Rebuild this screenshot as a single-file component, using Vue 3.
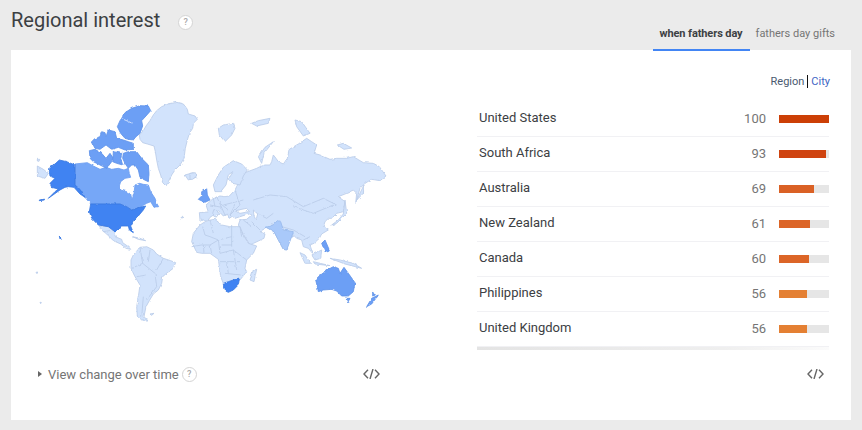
<script setup>
const rows = [
  { name: 'United States', value: 100, color: '#cc3f06' },
  { name: 'South Africa', value: 93, color: '#cf4410' },
  { name: 'Australia', value: 69, color: '#da6125' },
  { name: 'New Zealand', value: 61, color: '#dc6527' },
  { name: 'Canada', value: 60, color: '#dc6527' },
  { name: 'Philippines', value: 56, color: '#e48033' },
  { name: 'United Kingdom', value: 56, color: '#e48033' }
]
const light = [
  'M418 135L430 122 438 108 450 92 458 78 470 62 485 50 505 42 530 37 550 42 562 58 565 72 585 78 592 88 580 100 578 115 568 130 562 150 556 175 552 205 540 225 525 240 515 255 505 275 498 288 488 278 482 255 475 235 470 210 466 185 462 168 442 162 428 158 420 148Z',
  'M112 228L130 238 145 250 135 265 112 258Z',
  'M298 408L325 410 335 418 345 428 350 442 365 448 368 458 385 470 392 478 378 475 362 462 340 452 320 432 305 420Z',
  'M393 510L400 495 420 472 440 470 460 480 470 492 490 505 512 512 527 518 520 535 502 548 488 560 485 580 475 600 460 612 448 632 438 650 432 680 442 690 425 690 412 678 410 650 415 620 420 585 405 560 393 535Z',
  'M555 255L580 248 588 262 565 270Z',
  'M398 440L420 445 437 452 415 448Z',
  'M450 672L462 670 455 676Z',
  'M112 208L119 208 117 214 112 213Z',
  'M108 547L113 546 111 551Z',
  'M120 637L124 637 122 641Z',
  'M543 382L548 382 546 385Z'
]
const eurasia = [
  'M135 300L150 270 165 248 200 235 210 230 225 225 240 225 245 215 250 195 258 205 265 215 280 222 292 205 298 178 325 162 350 145 365 155 380 165 372 190 390 195 420 208 440 205 470 205 490 200 520 218 550 220 568 230 588 258 570 272 545 268 525 280 510 295 497 340 500 310 490 300 470 310 445 320 465 335 460 365 440 370 425 385 415 385 405 395 400 410 415 420 395 432 388 445 372 460 360 465 368 490 355 475 340 470 335 450 320 445 310 435 300 445 290 480 280 478 265 450 252 425 230 412 210 425 225 432 222 445 180 465 155 425 145 405 150 390 170 388 185 375 175 372 135 385 128 378 118 385 112 372 100 378 85 362 75 372 60 382 55 390 30 390 28 368 55 366 48 345 70 325 90 318 105 320 118 318Z',
  'M70 285L85 255 100 232 130 212 155 222 172 240 160 258 150 285 128 280 118 265 128 245 115 255 108 285 92 305 75 305Z',
  'M85 115L100 105 130 100 135 115 125 135 105 155 88 135Z',
  'M185 100L205 92 240 85 235 100 200 108Z',
  'M315 90L335 95 360 130 340 138 320 110Z',
  'M205 200L225 172 250 155 222 190 215 220Z',
  'M500 330L522 285 520 310Z',
  'M425 405L445 390 460 372 465 330 470 370 440 400Z',
  'M442 165L460 160 485 174 462 178Z',
  'M0 250L16 248 20 258 8 268 0 268Z',
  'M330 488L345 495 362 520 345 520Z',
  'M365 495L395 480 392 505 375 510Z',
  'M370 515L420 527 375 522Z',
  'M420 505L450 510 490 520 515 535 465 522Z',
  'M180 570L190 540 200 538 192 575Z',
  'M68 370L72 358 88 370 78 382Z'
]
const africa = 'M5 455L10 430 30 405 50 392 75 388 95 405 120 410 150 410 160 435 175 460 200 468 190 490 170 510 165 535 170 545 150 570 115 578 103 588 92 560 88 530 85 508 60 490 35 490 20 487Z'
const borders = [
  'M38 410L45 435 60 440 85 450 125 440M5 470L35 465 60 465 85 450 90 490 130 480 170 510M125 405V470M90 515H150M105 550L155 555M150 410L155 440M130 480L140 540M60 390L70 430M40 465L42 488M60 465L65 490M95 465H125M110 515L115 550',
  'M120 375L150 345 135 300M100 345L160 330M80 320L105 375M190 330L240 315 290 320 340 350 400 325 440 345M190 365L230 385 250 370M240 400L310 420 345 440M310 350L370 370 430 345M90 340L115 360M135 345L120 375M340 450L360 440M185 395L215 425M160 390L185 410M60 345L95 352M70 325L75 350'
]
const americaBorders = 'M420 472L428 520 465 550 470 590 440 630M395 535L428 520M490 505L470 540M450 480L445 515M310 425L340 420M410 560L440 555M430 620L425 680'
</script>

<template>
  <div class="page">
    <header class="head">
      <div class="title-wrap">
        <h1 class="title">Regional interest</h1>
        <span class="help help-title">?</span>
      </div>
      <nav class="tabs">
        <span class="tab active">when fathers day</span>
        <span class="tab">fathers day gifts</span>
      </nav>
    </header>

    <main class="card">
      <section class="left">
        <svg class="map" width="365" height="235" viewBox="30 95 365 235" aria-label="World map">
          <defs>
            <filter id="rough" x="-2%" y="-2%" width="104%" height="104%" filterUnits="objectBoundingBox">
              <feTurbulence type="fractalNoise" baseFrequency="0.22" numOctaves="2" seed="4" result="n" />
              <feDisplacementMap in="SourceGraphic" in2="n" scale="2.5" xChannelSelector="R" yChannelSelector="G" />
              <feGaussianBlur stdDeviation="0.25" />
            </filter>
          </defs>
          <g filter="url(#rough)">
            <rect x="30" y="95" width="365" height="235" fill="#fff" />
            <g transform="translate(0 90) scale(.33333)" stroke-width="2.5" stroke-linejoin="round">
              <path v-for="d in light" :key="d" :d="d" fill="#d2e3fc" stroke="#b9cbe8" />
              <path :d="americaBorders" fill="none" stroke="#b9cbe8" />
              <path d="M225 222L262 218 280 228 300 238 318 232 335 238 355 235 372 240 385 235 388 250 392 262 375 265 362 275 358 288 362 300 380 305 392 312 396 330 402 310 405 285 418 280 430 283 445 285 452 305 465 325 470 340 476 350 462 352 452 335 440 340 420 352 395 360 380 350 360 342 272 342 255 322 240 298 225 285Z" fill="#76a7f7" stroke="#6c9df0" />
              <g fill="#6c9ff5" stroke="#5e92e8">
                <path d="M352 110L360 92 365 85 375 68 395 55 420 47 445 48 452 62 438 78 425 92 428 108 420 130 408 140 400 150 385 148 375 145 362 130Z" />
                <path d="M275 155L285 145 300 140 305 125 315 128 318 140 325 120 345 125 350 145 370 150 385 155 400 160 400 178 375 180 355 172 335 178 318 165 300 178 285 175Z" />
                <path d="M268 182L285 178 305 190 318 205 330 190 340 205 335 215 320 235 300 225 280 215 270 205Z" />
                <path d="M340 185L365 190 362 205 368 225 350 220 338 215Z" />
                <path d="M370 190L385 185 410 185 425 205 445 225 447 250 445 275 430 268 420 262 415 240 405 225 395 225 385 235 375 220 368 205Z" />
              </g>
              <path d="M366 86L395 99" fill="none" stroke="#fff" stroke-width="2" />
              <g fill="#3f83f2" stroke="#3a78e0">
                <path d="M272 342L360 342 380 350 395 360 420 352 437 348 430 360 415 378 400 392 392 408 400 428 388 420 385 408 365 408 345 425 325 410 295 405 275 385 268 365Z" />
                <path d="M150 232L165 222 178 210 200 215 225 225 225 285 240 298 255 322 240 312 222 292 205 290 195 292 180 300 145 325 165 305 175 297 155 292 150 280 165 265 150 258 148 245Z" />
                <path d="M178 438L184 445 180 447Z" />
                <path d="M118 330L133 327 133 330 118 332Z" />
              </g>
            </g>
            <g transform="translate(190 90) scale(.33333)" stroke-width="2.5" stroke-linejoin="round">
              <path v-for="d in eurasia" :key="d" :d="d" fill="#d2e3fc" stroke="#b9cbe8" />
              <path :d="africa" fill="#d2e3fc" stroke="#b9cbe8" />
              <path v-for="d in borders" :key="d" :d="d" fill="none" stroke="#b9cbe8" />
              <path d="M135 362L170 355 178 365 150 370Z" fill="#fff" stroke="#b9cbe8" />
              <path d="M190 360L203 372 198 390 192 378Z" fill="#fff" stroke="#b9cbe8" />
              <path d="M228 412L250 405 262 392 272 395 280 420 310 425 305 440 290 480 280 478 265 450 252 425Z" fill="#a9c9fa" stroke="#98b9ec" />
              <g fill="#6c9ff5" stroke="#5e92e8">
                <path d="M377 570L385 560 405 545 415 538 430 530 445 535 450 550 462 532 475 550 495 578 490 605 475 618 455 618 440 603 425 598 400 600 385 605 382 590Z" />
                <path d="M468 625L480 625 473 638Z" />
                <path d="M530 650L545 625 565 615 545 642Z" />
                <path d="M548 603L556 615 548 618Z" />
                <path d="M25 328L35 318 35 305 50 295 52 315 60 330 45 337Z" />
                <path d="M395 460L405 450 418 480 405 485Z" />
              </g>
              <path d="M103 590L100 580 115 575 130 570 148 567 145 585 130 600 115 607 107 603Z" fill="#3f83f2" stroke="#3a78e0" />
            </g>
          </g>
        </svg>
        <div class="foot">
          <span class="view">
            <i class="tri"></i>
            <span class="view-text">View change over time</span>
            <span class="help">?</span>
          </span>
          <svg class="code" width="17" height="10" viewBox="0 0 17 10"><path d="M5 .8L1 5l4 4.200M12 .8L16 5l-4 4.200M10 0L7 10" fill="none" stroke="#666" stroke-width="1.400" /></svg>
        </div>
      </section>

      <section class="right">
        <div class="switch"><span class="region">Region</span><span class="city">City</span></div>
        <ul class="list">
          <li v-for="r in rows" :key="r.name" class="row">
            <span class="name">{{ r.name }}</span>
            <span class="num">{{ r.value }}</span>
            <span class="track"><span class="fill" :style="{ width: r.value + '%', background: r.color }"></span></span>
          </li>
        </ul>
        <div class="right-foot">
          <svg class="code" width="17" height="10" viewBox="0 0 17 10"><path d="M5 .8L1 5l4 4.200M12 .8L16 5l-4 4.200M10 0L7 10" fill="none" stroke="#666" stroke-width="1.400" /></svg>
        </div>
      </section>
    </main>
  </div>
</template>

<style>
html, body { margin: 0; background: #ebebeb; }
</style>

<style scoped>
.page {
  width: 862px;
  height: 430px;
  overflow: hidden;
  background: #ebebeb;
  font-family: Roboto, sans-serif;
}
.head {
  height: 50px;
  padding: 0 11px;
  display: flex;
  justify-content: space-between;
  box-sizing: border-box;
}
.title-wrap { display: flex; align-items: flex-start; padding-top: 8px; }
.title { margin: 0; font-size: 20px; line-height: 25px; font-weight: 400; color: #3c4043; }
.help {
  width: 15px;
  height: 15px;
  flex: none;
  border: 1px solid #d4d4d4;
  border-radius: 50%;
  box-sizing: border-box;
  background: #fff;
  color: #a8a8a8;
  font-size: 9px;
  font-weight: 500;
  line-height: 13px;
  text-align: center;
}
.help-title { margin: 7px 0 0 18px; }
.tabs { display: flex; margin-right: 10px; position: relative; z-index: 1; }
.tab {
  height: 51px;
  box-sizing: border-box;
  padding: 27px 6px 0;
  font-size: 11px;
  line-height: 13px;
  color: #757575;
}
.tab.active {
  font-weight: 700;
  letter-spacing: -.1px;
  color: #3c4043;
  border-bottom: 2px solid #4285f4;
  padding-right: 7px;
}
.card {
  margin: 0 11px;
  height: 370px;
  background: #fff;
  display: flex;
}
.left {
  width: 370px;
  padding: 45px 0 0 19px;
  flex: none;
}
.map { display: block; }
.foot {
  margin: 34px 0 0 8px;
  width: 342px;
  height: 20px;
  display: flex;
  align-items: center;
  justify-content: space-between;
}
.view { display: flex; align-items: center; }
.tri {
  width: 0;
  height: 0;
  border-left: 4px solid #666;
  border-top: 3.5px solid transparent;
  border-bottom: 3.5px solid transparent;
}
.view-text { margin-left: 6px; font-size: 13px; color: #757575; }
.foot .help { margin-left: 3px; }
.right {
  margin-left: 77px;
  width: 352px;
  display: flex;
  flex-direction: column;
}
.switch {
  margin: 25px -1px 0 0;
  height: 13px;
  display: flex;
  justify-content: flex-end;
  font-size: 11px;
  line-height: 14px;
}
.region { color: #4a5a70; padding-right: 3px; border-right: 1px solid #111; }
.city { color: #3d66c4; padding-left: 3px; }
.list { list-style: none; margin: 14px 0 0; padding: 0; }
.row {
  height: 35px;
  box-sizing: border-box;
  border-bottom: 1px solid #f1f1f4;
  padding: 0 0 2px 2px;
  display: flex;
  align-items: center;
  font-size: 13px;
}
.name { color: #3c4043; flex: 1; margin-bottom: 2px; }
.num { color: #757575; width: 40px; text-align: right; margin-right: 13px; }
.track { width: 50px; height: 8px; margin-top: 2px; background: #e6e6e6; display: block; }
.fill { display: block; height: 100%; }
.right-foot {
  height: 40px;
  padding-top: 22px;
  padding-right: 5px;
  box-sizing: border-box;
  display: flex;
  justify-content: flex-end;
  align-items: flex-start;
  background: linear-gradient(90deg, #e4e4e4, #efefef 70%, #fbfbfb) no-repeat 0 0 / 100% 3px;
}
</style>
